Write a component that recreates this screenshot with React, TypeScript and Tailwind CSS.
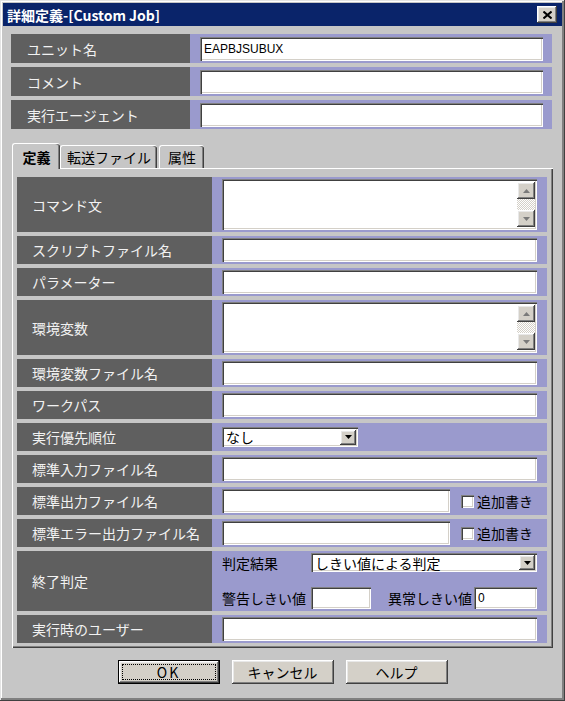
import React from "react";

const sunken =
  "bg-white shadow-[inset_1px_1px_0_#808080,inset_2px_2px_0_#404040,inset_-1px_-1px_0_#ffffff,inset_-2px_-2px_0_#d4d0c8]";
const raised =
  "bg-[#d4d0c8] shadow-[inset_-1px_-1px_0_#404040,inset_1px_1px_0_#ffffff,inset_-2px_-2px_0_#808080,inset_2px_2px_0_#e8e8e8]";

const font = { fontFamily: '"Noto Sans CJK JP", "Noto Sans", sans-serif' };

function DownTri({ color = "#000" }: { color?: string }) {
  return (
    <svg width="7" height="4" viewBox="0 0 7 4">
      <path d="M0 0 L7 0 L3.5 4 Z" fill={color} />
    </svg>
  );
}
function UpTri({ color = "#000" }: { color?: string }) {
  return (
    <svg width="7" height="4" viewBox="0 0 7 4">
      <path d="M0 4 L7 4 L3.5 0 Z" fill={color} />
    </svg>
  );
}

function Label({ text, w }: { text: string; w: string }) {
  return (
    <div
      className={`${w} shrink-0 bg-[#5f5f5f] text-[#f2f2f2] text-[14px] leading-none flex items-center pl-[15px]`}
    >
      {text}
    </div>
  );
}

function TextBox({ value }: { value?: string }) {
  return (
    <div className={`${sunken} h-[24px] w-full flex items-center pl-[4px]`}>
      {value && (
        <span
          className="text-[12px] leading-none text-black"
          style={{ fontFamily: '"Liberation Sans", Arial, sans-serif' }}
        >
          {value}
        </span>
      )}
    </div>
  );
}

function TextArea() {
  return (
    <div className={`${sunken} h-[51px] w-full flex justify-end py-[3px] pr-[2px]`}>
      <div className="w-[18px] flex flex-col justify-between bg-[repeating-conic-gradient(#ffffff_0_25%,#d4d0c8_0_50%)] bg-[length:2px_2px]">
        <div className={`${raised} h-[17px] flex items-center justify-center`}>
          <UpTri color="#7a7a7a" />
        </div>
        <div className={`${raised} h-[17px] flex items-center justify-center`}>
          <DownTri color="#7a7a7a" />
        </div>
      </div>
    </div>
  );
}

function Select({ value, w, h }: { value: string; w: string; h: string }) {
  return (
    <div className={`${sunken} ${w} ${h} flex items-center justify-between pl-[4px] pr-[2px]`}>
      <span className="text-[14px] leading-none text-black">{value}</span>
      <div className={`${raised} w-[16px] h-[15px] flex items-center justify-center`}>
        <DownTri />
      </div>
    </div>
  );
}

function Checkbox() {
  return <div className={`${sunken} w-[13px] h-[13px] shrink-0`} />;
}

function TopRow({ label, value }: { label: string; value?: string }) {
  return (
    <div className="flex h-[29px]">
      <Label text={label} w="w-[179px] pl-[16px]" />
      <div className="flex-1 bg-[#9a9acd] flex items-center pl-[10px] pr-[9px]">
        <TextBox value={value} />
      </div>
    </div>
  );
}

function PanelRow({
  label,
  h = "h-[28px]",
  children,
}: {
  label: string;
  h?: string;
  children: React.ReactNode;
}) {
  return (
    <div className={`flex ${h}`}>
      <Label text={label} w="w-[195px]" />
      <div className="flex-1 bg-[#9a9acd] flex items-center pl-[10px] pr-[10px]">{children}</div>
    </div>
  );
}

function Button({ text, def }: { text: string; def?: boolean }) {
  if (def) {
    return (
      <div className="w-[102px] h-[24px] border border-black">
        <div className={`${raised} w-full h-full flex items-center justify-center p-[3px]`}>
          <div className="w-full h-full border border-dotted border-black flex items-center justify-center">
            <span className="text-[14px] leading-none tracking-[2px] text-black">OK</span>
          </div>
        </div>
      </div>
    );
  }
  return (
    <div className={`${raised} w-[102px] h-[24px] flex items-center justify-center`}>
      <span className="text-[14px] leading-none text-black">{text}</span>
    </div>
  );
}

export default function App() {
  return (
    <div
      className="w-[565px] h-[701px] bg-[#c6c6c6] flex flex-col shadow-[inset_-1px_-1px_0_#404040,inset_1px_1px_0_#e4e4e4,inset_-3px_-3px_0_#808080,inset_2px_2px_0_#ffffff]"
      style={font}
    >
      {/* Title bar */}
      <div className="mx-[3px] mt-[3px] h-[23px] bg-[#0a246a] flex items-center justify-between pl-[4px] pr-[5px]">
        <span className="text-white text-[14px] font-bold leading-none">詳細定義-[Custom Job]</span>
        <div className={`${raised} w-[20px] h-[17px] flex items-center justify-center`}>
          <svg width="9" height="8" viewBox="0 0 9 8">
            <path d="M0.5 0.5 L8.5 7.5 M8.5 0.5 L0.5 7.5" stroke="#000" strokeWidth="2" />
          </svg>
        </div>
      </div>

      {/* Top fields */}
      <div className="mt-[8px] pl-[11px] pr-[13px] flex flex-col gap-[4px]">
        <TopRow label="ユニット名" value="EAPBJSUBUX" />
        <TopRow label="コメント" />
        <TopRow label="実行エージェント" />
      </div>

      {/* Tabs */}
      <div className="mt-[14px] pl-[12px] flex items-end h-[25px]">
        <div className="relative z-10 -mb-px w-[48px] h-[26px] bg-[#c6c6c6] border-t border-l border-white rounded-tl-[3px] rounded-tr-[3px] shadow-[inset_-1px_0_0_#404040,inset_-2px_0_0_#808080] flex items-center justify-center">
          <span className="text-[14px] font-bold leading-none text-black">定義</span>
        </div>
        <div className="w-[97px] h-[23px] border-t border-l border-white rounded-tl-[3px] rounded-tr-[3px] shadow-[inset_-1px_0_0_#404040,inset_-2px_0_0_#808080] flex items-center justify-center">
          <span className="text-[14px] leading-none text-black">転送ファイル</span>
        </div>
        <div className="w-[45px] h-[23px] ml-[2px] border-t border-l border-white rounded-tl-[3px] rounded-tr-[3px] shadow-[inset_-1px_0_0_#404040,inset_-2px_0_0_#808080] flex items-center justify-center">
          <span className="text-[14px] leading-none text-black">属性</span>
        </div>
      </div>

      {/* Panel */}
      <div className="mx-[12px] border-t border-l border-white shadow-[inset_-1px_-1px_0_#404040,inset_-2px_-2px_0_#808080] pt-[8px] pl-[4px] pr-[6px] pb-[5px] flex flex-col gap-[4px]">
        <PanelRow label="コマンド文" h="h-[55px]">
          <TextArea />
        </PanelRow>
        <PanelRow label="スクリプトファイル名">
          <TextBox />
        </PanelRow>
        <PanelRow label="パラメーター">
          <TextBox />
        </PanelRow>
        <PanelRow label="環境変数" h="h-[55px]">
          <TextArea />
        </PanelRow>
        <PanelRow label="環境変数ファイル名">
          <TextBox />
        </PanelRow>
        <PanelRow label="ワークパス">
          <TextBox />
        </PanelRow>
        <PanelRow label="実行優先順位">
          <Select value="なし" w="w-[136px]" h="h-[20px]" />
        </PanelRow>
        <PanelRow label="標準入力ファイル名">
          <TextBox />
        </PanelRow>
        <PanelRow label="標準出力ファイル名">
          <div className="flex items-center w-full">
            <div className="w-[228px] shrink-0">
              <TextBox />
            </div>
            <div className="ml-[11px]">
              <Checkbox />
            </div>
            <span className="ml-[3px] text-[14px] leading-none text-black">追加書き</span>
          </div>
        </PanelRow>
        <PanelRow label="標準エラー出力ファイル名">
          <div className="flex items-center w-full">
            <div className="w-[228px] shrink-0">
              <TextBox />
            </div>
            <div className="ml-[11px]">
              <Checkbox />
            </div>
            <span className="ml-[3px] text-[14px] leading-none text-black">追加書き</span>
          </div>
        </PanelRow>
        <div className="flex h-[60px]">
          <Label text="終了判定" w="w-[195px]" />
          <div className="flex-1 bg-[#9a9acd] flex flex-col justify-between pl-[10px] pr-[10px] pt-[2px] pb-[2px]">
            <div className="flex items-center h-[19px]">
              <span className="w-[89px] shrink-0 text-[14px] leading-none text-black">判定結果</span>
              <Select value="しきい値による判定" w="flex-1" h="h-[19px]" />
            </div>
            <div className="flex items-center h-[22px]">
              <span className="w-[89px] shrink-0 text-[14px] leading-none text-black">警告しきい値</span>
              <div className={`${sunken} w-[60px] h-[22px] shrink-0`} />
              <span className="ml-[17px] w-[86px] shrink-0 text-[14px] leading-none text-black">異常しきい値</span>
              <div className={`${sunken} flex-1 h-[22px] flex items-center pl-[4px]`}>
                <span
                  className="text-[12px] leading-none text-black"
                  style={{ fontFamily: '"Liberation Sans", Arial, sans-serif' }}
                >
                  0
                </span>
              </div>
            </div>
          </div>
        </div>
        <PanelRow label="実行時のユーザー">
          <TextBox />
        </PanelRow>
      </div>

      {/* Buttons */}
      <div className="mt-[12px] flex justify-center gap-[12px]">
        <Button text="OK" def />
        <Button text="キャンセル" />
        <Button text="ヘルプ" />
      </div>
    </div>
  );
}
